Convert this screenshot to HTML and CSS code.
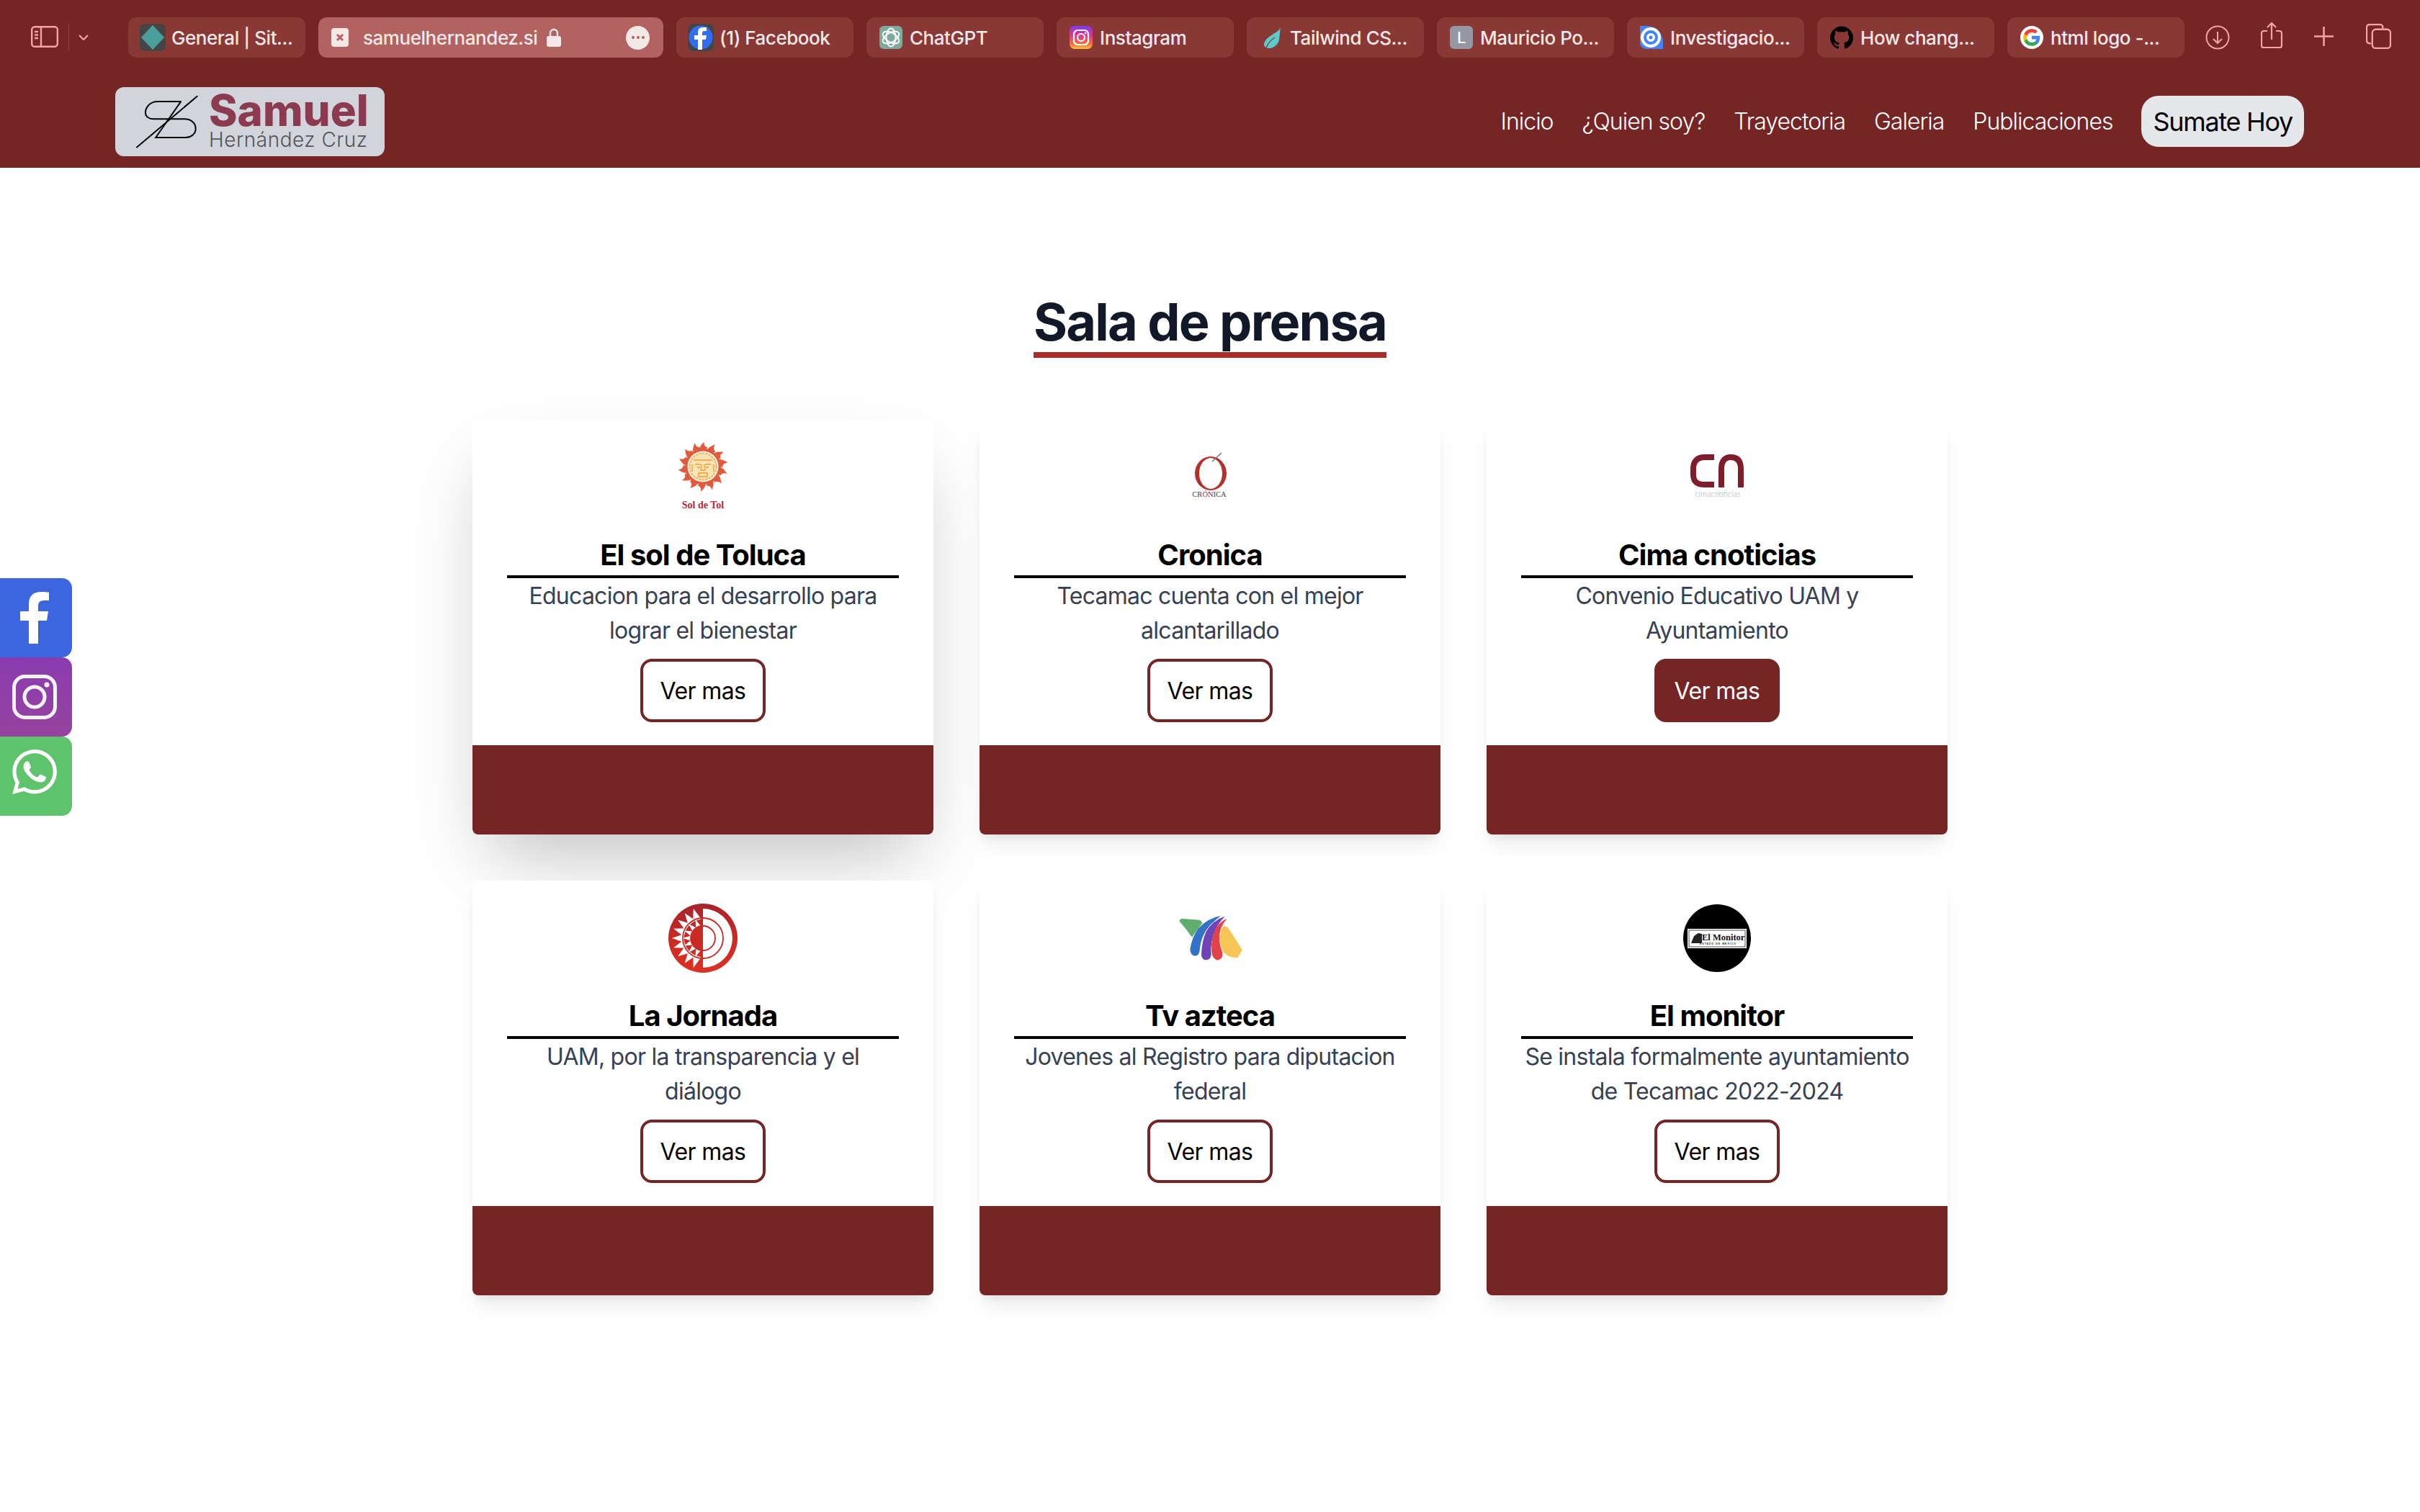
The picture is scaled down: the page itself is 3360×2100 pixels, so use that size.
FILE: index.html
```html
<!DOCTYPE html>
<html lang="es">

<head>
  <title>Sala de prensa</title>
  <meta charset="utf-8">
  <link rel="stylesheet" href="styles.css">
</head>

<body>
  <header class="header">
    <div class="strip">
      <div class="strip-left">
        <svg class="icon-sidebar" viewBox="0 0 38 30" fill="none" stroke="#f5a5a0" stroke-width="2.4">
          <rect x="1.2" y="1.2" width="35.6" height="27.6" rx="4"/>
          <path d="M14 1.2v27.6M5 8h5M5 12.500h5M5 17h5"/>
        </svg>
        <span class="strip-divider"></span>
        <svg class="icon-chevron" viewBox="0 0 14 8" fill="none" stroke="#f5a5a0" stroke-width="2.2"><path d="M1 1l6 6 6-6"/></svg>
      </div>

      <div class="tab">
        <svg class="fav fav-wide" viewBox="0 0 36 38"><rect width="36" height="38" rx="7" fill="#454545"/><path d="M18 2l16 17-16 17L2 19z" fill="#4a9f9b"/></svg>
        <span>General | Sit...</span>
      </div>
      <div class="tab tab-active">
        <svg class="fav-close" viewBox="0 0 24 26"><rect width="24" height="26" rx="4" fill="#f3e8e6"/><path d="M8 9l8 8M16 9l-8 8" stroke="#b26260" stroke-width="3"/></svg>
        <span>samuelhernandez.si</span>
        <svg class="lock" viewBox="0 0 20 26"><path d="M5 12V7a5 5 0 0 1 10 0v5" fill="none" stroke="#f3e8e6" stroke-width="2.400"/><rect y="11" width="20" height="15" rx="3" fill="#f3e8e6"/></svg>
        <span class="tab-more"><i></i><i></i><i></i></span>
      </div>
      <div class="tab">
        <svg class="fav fav-wide" viewBox="0 0 36 38"><rect width="36" height="38" rx="7" fill="#454545"/><circle cx="18" cy="19" r="16.500" fill="#2f6ef0"/><path d="M20 36V22h5l1-6h-6v-3c0-2 1-3 3-3h3V5h-5c-4.500 0-7 2.500-7 7v4h-5v6h5v14z" fill="#fff"/></svg>
        <span>(1) Facebook</span>
      </div>
      <div class="tab">
        <svg class="fav" viewBox="0 0 32 32" fill="none"><rect width="32" height="32" rx="6" fill="#7fa99b"/><g stroke="#fff" stroke-width="1.800"><ellipse cx="16" cy="16" rx="6.500" ry="12.500"/><ellipse cx="16" cy="16" rx="6.500" ry="12.500" transform="rotate(60 16 16)"/><ellipse cx="16" cy="16" rx="6.500" ry="12.500" transform="rotate(120 16 16)"/></g></svg>
        <span>ChatGPT</span>
      </div>
      <div class="tab">
        <svg class="fav" viewBox="0 0 32 32" fill="none"><defs><linearGradient id="ig" x1="0" y1="0" x2="0" y2="1"><stop offset="0" stop-color="#7b3ff2"/><stop offset=".4" stop-color="#e0308f"/><stop offset=".8" stop-color="#f4753c"/><stop offset="1" stop-color="#fbc33d"/></linearGradient></defs><rect width="32" height="32" rx="7" fill="url(#ig)"/><rect x="6" y="6" width="20" height="20" rx="5.500" stroke="#fff" stroke-width="2.200"/><circle cx="16" cy="16" r="5" stroke="#fff" stroke-width="2.200"/><circle cx="22" cy="10" r="1.300" fill="#fff"/></svg>
        <span>Instagram</span>
      </div>
      <div class="tab">
        <svg class="fav" viewBox="0 0 32 32"><path d="M29 1c-1 5-5 7-11 11-8 5-12 9-12 14 0 3 4 5 7 5 7 0 13-6 14-12 1-6 1-13 2-18z" fill="#5ccccb"/><path d="M9 31c2-7 6-11 12-15" stroke="#8a3836" stroke-width="1.200" fill="none"/></svg>
        <span>Tailwind CS...</span>
      </div>
      <div class="tab">
        <span class="fav fav-letter">L</span>
        <span>Mauricio Po...</span>
      </div>
      <div class="tab">
        <svg class="fav" viewBox="0 0 32 32" fill="none"><path d="M0 0h10c12 0 22 10 22 22v10H8c-4 0-8-4-8-8z" fill="#4285f4"/><circle cx="15" cy="16" r="14" fill="#fff"/><circle cx="15" cy="16" r="8" stroke="#4285f4" stroke-width="4"/><circle cx="15" cy="16" r="2.500" fill="#4285f4"/></svg>
        <span>Investigacio...</span>
      </div>
      <div class="tab">
        <svg class="fav" viewBox="0 0 24 24"><path fill="#000" d="M12 .297c-6.630 0-12 5.373-12 12 0 5.303 3.438 9.800 8.205 11.385.6.113.82-.258.82-.577 0-.285-.01-1.040-.015-2.040-3.338.724-4.042-1.610-4.042-1.610C4.422 18.070 3.633 17.700 3.633 17.700c-1.087-.744.084-.729.084-.729 1.205.084 1.838 1.236 1.838 1.236 1.070 1.835 2.809 1.305 3.495.998.108-.776.417-1.305.76-1.605-2.665-.3-5.466-1.332-5.466-5.930 0-1.310.465-2.380 1.235-3.220-.135-.303-.54-1.523.105-3.176 0 0 1.005-.322 3.300 1.230.96-.267 1.980-.399 3-.405 1.020.006 2.040.138 3 .405 2.280-1.552 3.285-1.230 3.285-1.230.645 1.653.24 2.873.12 3.176.765.84 1.230 1.910 1.230 3.220 0 4.610-2.805 5.625-5.475 5.920.42.36.81 1.096.81 2.220 0 1.606-.015 2.896-.015 3.286 0 .315.21.69.825.57C20.565 22.092 24 17.592 24 12.297c0-6.627-5.373-12-12-12"/></svg>
        <span>How chang...</span>
      </div>
      <div class="tab">
        <svg class="fav" viewBox="0 0 24 24"><circle cx="12" cy="12" r="12" fill="#fff"/><g transform="translate(2.400 2.400) scale(.8)"><path fill="#4285F4" d="M22.560 12.250c0-.78-.07-1.530-.2-2.250H12v4.260h5.920c-.26 1.370-1.040 2.530-2.210 3.310v2.770h3.570c2.080-1.920 3.280-4.740 3.280-8.090z"/><path fill="#34A853" d="M12 23c2.970 0 5.460-.98 7.280-2.660l-3.570-2.770c-.98.66-2.230 1.060-3.710 1.060-2.860 0-5.290-1.930-6.160-4.530H2.180v2.840C3.990 20.530 7.700 23 12 23z"/><path fill="#FBBC05" d="M5.840 14.090c-.22-.66-.35-1.360-.35-2.090s.13-1.430.35-2.090V7.070H2.180C1.430 8.550 1 10.220 1 12s.43 3.450 1.180 4.930l3.660-2.840z"/><path fill="#EA4335" d="M12 5.380c1.620 0 3.060.56 4.210 1.640l3.150-3.150C17.450 2.090 14.970 1 12 1 7.700 1 3.990 3.470 2.180 7.070l3.660 2.840c.87-2.600 3.300-4.530 6.160-4.530z"/></g></svg>
        <span>html logo -...</span>
      </div>

      <div class="strip-right">
        <svg class="tool-download" viewBox="0 0 34 34" fill="none" stroke="#f5a5a0" stroke-width="2"><circle cx="17" cy="17" r="15.500"/><path d="M17 9v16M11 19l6 6 6-6"/></svg>
        <svg class="tool-share" viewBox="0 0 30 38" fill="none" stroke="#f5a5a0" stroke-width="2.200"><path d="M9 13H4a3 3 0 0 0-3 3v17a3 3 0 0 0 3 3h22a3 3 0 0 0 3-3V16a3 3 0 0 0-3-3h-5M15 25V2M9 8l6-6 6 6"/></svg>
        <svg class="tool-plus" viewBox="0 0 28 28" fill="none" stroke="#f5a5a0" stroke-width="2.600"><path d="M14 0v28M0 14h28"/></svg>
        <svg class="tool-tabs" viewBox="0 0 36 36" fill="none" stroke="#f5a5a0" stroke-width="2.400"><path d="M7 28H5a4 4 0 0 1-4-4V5a4 4 0 0 1 4-4h15a4 4 0 0 1 4 4v2"/><rect x="9" y="8" width="26" height="27" rx="5"/></svg>
      </div>
    </div>

    <div class="navbar">
      <a class="logo" href="#">
        <svg class="logo-mark" viewBox="165 92 268 228" fill="none" stroke="#000" stroke-width="6" stroke-linecap="round">
          <path d="M174 313L426 100"/>
          <path d="M358 122H262C225 122 210 150 210 168C210 185 225 195 245 195H372C405 195 420 215 420 235C420 258 400 272 378 272H253L358 122"/>
        </svg>
        <span class="logo-text">
          <span class="logo-name">Samuel</span>
          <span class="logo-sub">Hernández Cruz</span>
        </span>
      </a>
      <nav class="nav">
        <a href="#">Inicio</a>
        <a href="#">¿Quien soy?</a>
        <a href="#">Trayectoria</a>
        <a href="#">Galeria</a>
        <a href="#">Publicaciones</a>
        <a class="nav-cta" href="#">Sumate Hoy</a>
      </nav>
    </div>
  </header>

  <div class="social">
    <a class="social-item social-fb" href="#">
      <svg viewBox="0 0 40 72"><path fill="#fff" d="M12 72V40H0V27h12V17C12 5 19 0 29 0c5 0 9 .4 11 .7V12h-7c-6 0-8 3-8 8v7h14l-2 13H25v32z"/></svg>
    </a>
    <a class="social-item social-ig" href="#">
      <svg viewBox="0 0 62 62" fill="none" stroke="#f3f4f6" stroke-width="5"><rect x="2.500" y="2.500" width="57" height="57" rx="15"/><circle cx="31" cy="31" r="14"/><circle cx="48" cy="14" r="3.500" fill="#f3f4f6" stroke="none"/></svg>
    </a>
    <a class="social-item social-wa" href="#">
      <svg viewBox="0 0 24 24"><path fill="#fff" d="M17.472 14.382c-.297-.149-1.758-.867-2.030-.967-.273-.099-.471-.148-.67.15-.197.297-.767.966-.94 1.164-.173.199-.347.223-.644.075-.297-.15-1.255-.463-2.390-1.475-.883-.788-1.480-1.761-1.653-2.059-.173-.297-.018-.458.13-.606.134-.133.298-.347.446-.52.149-.174.198-.298.298-.497.099-.198.05-.371-.025-.52-.075-.149-.669-1.612-.916-2.207-.242-.579-.487-.5-.669-.51-.173-.008-.371-.01-.57-.01-.198 0-.52.074-.792.372-.272.297-1.040 1.016-1.040 2.479 0 1.462 1.065 2.875 1.213 3.074.149.198 2.096 3.200 5.077 4.487.709.306 1.262.489 1.694.625.712.227 1.360.195 1.871.118.571-.085 1.758-.719 2.006-1.413.248-.694.248-1.289.173-1.413-.074-.124-.272-.198-.57-.347m-5.421 7.403h-.004a9.870 9.870 0 01-5.031-1.378l-.361-.214-3.741.982.998-3.648-.235-.374a9.860 9.860 0 01-1.510-5.260c.001-5.450 4.436-9.884 9.888-9.884 2.640 0 5.122 1.030 6.988 2.898a9.825 9.825 0 012.893 6.994c-.003 5.450-4.437 9.884-9.885 9.884m8.413-18.297A11.815 11.815 0 0012.050 0C5.495 0 .16 5.335.157 11.892c0 2.096.547 4.142 1.588 5.945L.057 24l6.305-1.654a11.882 11.882 0 005.683 1.448h.005c6.554 0 11.890-5.335 11.893-11.893a11.821 11.821 0 00-3.480-8.413z"/></svg>
    </a>
  </div>

  <main class="main">
    <div class="heading-row">
      <h1 class="heading">Sala de prensa</h1>
    </div>

    <section class="grid">
      <article class="card card-raised">
        <div class="card-body">
          <svg class="card-logo" viewBox="0 0 96 96">
            <defs>
              <path id="ray" d="M44 12C42 7 45 3 50 -2C49 2 50 5 55 7C52 9 50 11 50 14z" fill="#e05a3c"/>
            </defs>
            <circle cx="48" cy="33" r="25" fill="#e05a3c"/>
            <use href="#ray"/>
            <use href="#ray" transform="rotate(26 48 33)"/>
            <use href="#ray" transform="rotate(52 48 33)"/>
            <use href="#ray" transform="rotate(78 48 33)"/>
            <use href="#ray" transform="rotate(104 48 33)"/>
            <use href="#ray" transform="rotate(130 48 33)"/>
            <use href="#ray" transform="rotate(156 48 33)"/>
            <use href="#ray" transform="rotate(182 48 33)"/>
            <use href="#ray" transform="rotate(208 48 33)"/>
            <use href="#ray" transform="rotate(234 48 33)"/>
            <use href="#ray" transform="rotate(260 48 33)"/>
            <use href="#ray" transform="rotate(286 48 33)"/>
            <use href="#ray" transform="rotate(312 48 33)"/>
            <use href="#ray" transform="rotate(338 48 33)"/>
            <circle cx="48" cy="33" r="21.500" fill="#fff"/>
            <circle cx="48" cy="33" r="20" fill="#fbe3b8"/>
            <g fill="none" stroke="#f4b04f" stroke-width="1.800">
              <circle cx="48" cy="33" r="18.500" stroke-dasharray="3 1.500"/>
              <path d="M35 24h26M37 30h8M51 30h8M40 34h4M52 34h4M46 30l-1 8h6l-1-8M42 42h12v5H42zM33 30v10M63 30v10"/>
            </g>
            <text class="logo-blackletter" x="48" y="91" text-anchor="middle">Sol de Tol</text>
          </svg>
          <h2 class="card-title">El sol de Toluca</h2>
          <p class="card-text">Educacion para el desarrollo para lograr el bienestar</p>
          <a class="btn" href="#">Ver mas</a>
        </div>
        <div class="card-foot"></div>
      </article>

      <article class="card">
        <div class="card-body">
          <svg class="card-logo" viewBox="0 0 96 96">
            <ellipse cx="49" cy="42.500" rx="22" ry="23.500" fill="#b5302a"/>
            <ellipse cx="49" cy="42.500" rx="16" ry="21.500" fill="#fff"/>
            <path d="M51 26L64 14" stroke="#777" stroke-width="1.500"/>
            <text class="logo-cronica" x="47" y="75" text-anchor="middle">CR<tspan fill="#b5302a">Ó</tspan>NICA</text>
          </svg>
          <h2 class="card-title">Cronica</h2>
          <p class="card-text">Tecamac cuenta con el mejor alcantarillado</p>
          <a class="btn" href="#">Ver mas</a>
        </div>
        <div class="card-foot"></div>
      </article>

      <article class="card">
        <div class="card-body">
          <svg class="card-logo" viewBox="0 0 96 96" fill="none" stroke="#7f1d2d" stroke-width="8">
            <path d="M44 20H31C20 20 15 26 15 36V44C15 54 20 58 31 58H44"/>
            <path d="M54 62V36C54 25 59 20 67 20C76 20 81 25 81 36V62"/>
            <text class="logo-cima" x="49" y="75" text-anchor="middle">cimacnoticias</text>
          </svg>
          <h2 class="card-title">Cima cnoticias</h2>
          <p class="card-text">Convenio Educativo UAM y Ayuntamiento</p>
          <a class="btn btn-filled" href="#">Ver mas</a>
        </div>
        <div class="card-foot"></div>
      </article>

      <article class="card">
        <div class="card-body">
          <svg class="card-logo" viewBox="0 0 96 96">
            <defs>
              <linearGradient id="jornada" x1="0" y1="0" x2="0" y2="1"><stop offset="0" stop-color="#a8222e"/><stop offset=".5" stop-color="#c92a24"/><stop offset="1" stop-color="#dc3124"/></linearGradient>
              <polygon id="jout" points="22,42 22,54 5,48" fill="#fff"/>
              <polygon id="jin" points="31,44.500 31,51.500 20,48" fill="#fff"/>
            </defs>
            <circle cx="48" cy="48" r="48" fill="url(#jornada)"/>
            <path d="M48 7A41 41 0 0 1 48 89z" fill="#fff"/>
            <use href="#jout" transform="rotate(-72 48 48)"/>
            <use href="#jout" transform="rotate(-54 48 48)"/>
            <use href="#jout" transform="rotate(-36 48 48)"/>
            <use href="#jout" transform="rotate(-18 48 48)"/>
            <use href="#jout"/>
            <use href="#jout" transform="rotate(18 48 48)"/>
            <use href="#jout" transform="rotate(36 48 48)"/>
            <use href="#jout" transform="rotate(54 48 48)"/>
            <use href="#jout" transform="rotate(72 48 48)"/>
            <circle cx="48" cy="48" r="28" fill="none" stroke="#c92a24" stroke-width="1.800"/>
            <use href="#jin" transform="rotate(-68 48 48)"/>
            <use href="#jin" transform="rotate(-45 48 48)"/>
            <use href="#jin" transform="rotate(-22 48 48)"/>
            <use href="#jin"/>
            <use href="#jin" transform="rotate(22 48 48)"/>
            <use href="#jin" transform="rotate(45 48 48)"/>
            <use href="#jin" transform="rotate(68 48 48)"/>
            <circle cx="48" cy="48" r="17" fill="#fff" stroke="#c92a24" stroke-width="1.800"/>
            <path d="M48 31A17 17 0 0 0 48 65z" fill="#c92a24"/>
          </svg>
          <h2 class="card-title">La Jornada</h2>
          <p class="card-text">UAM, por la transparencia y el diálogo</p>
          <a class="btn" href="#">Ver mas</a>
        </div>
        <div class="card-foot"></div>
      </article>

      <article class="card">
        <div class="card-body">
          <svg class="card-logo" viewBox="96 45 288 288">
            <path fill="#5fae6e" d="M112 118Q115 108 125 108L195 113Q208 118 207 128Q185 155 165 185Q140 150 112 118Z"/>
            <path fill="#3273c6" d="M285 96Q230 105 190 150Q165 185 157 235Q158 262 178 263Q195 262 197 240Q200 180 240 135Q260 115 285 96Z"/>
            <path fill="#6d45b5" d="M302 98Q250 115 225 160Q205 200 204 260Q208 280 225 280Q245 278 245 255Q240 205 262 155Q280 120 302 98Z"/>
            <path fill="#e2434b" d="M310 107Q270 125 255 170Q240 215 250 262Q260 282 275 280Q295 275 292 250Q270 195 285 150Q295 125 310 107Z"/>
            <path fill="#f7c556" d="M300 140Q290 138 285 160Q272 205 295 245Q315 272 355 270Q365 255 374 238Q345 190 318 150Q310 138 300 140Z"/>
          </svg>
          <h2 class="card-title">Tv azteca</h2>
          <p class="card-text">Jovenes al Registro para diputacion federal</p>
          <a class="btn" href="#">Ver mas</a>
        </div>
        <div class="card-foot"></div>
      </article>

      <article class="card">
        <div class="card-body">
          <svg class="card-logo" viewBox="0 0 96 96">
            <circle cx="48" cy="48" r="47" fill="#000"/>
            <rect x="7" y="35" width="82" height="27" fill="#fff"/>
            <rect x="9" y="37" width="78" height="23" fill="none" stroke="#222" stroke-width=".8"/>
            <path d="M12 55L16 45L22 41L27 42V55z" fill="#222"/>
            <text class="logo-monitor" x="27" y="51">El Monitor</text>
            <text class="logo-monitor-sub" x="24" y="57">ESTADO DE MEXICO</text>
          </svg>
          <h2 class="card-title">El monitor</h2>
          <p class="card-text">Se instala formalmente ayuntamiento de Tecamac 2022-2024</p>
          <a class="btn" href="#">Ver mas</a>
        </div>
        <div class="card-foot"></div>
      </article>
    </section>
  </main>
</body>

</html>
```

FILE: styles.css
```css
* {
  box-sizing: border-box;
}

body {
  margin: 0;
  height: 2100px;
  overflow: hidden;
  background-color: #fff;
  font-family: Inter, "Liberation Sans", sans-serif;
}

a {
  text-decoration: none;
  color: inherit;
}

/* top bar */

.header {
  height: 233px;
  background-color: #752524;
}

.strip {
  display: flex;
  align-items: center;
  gap: 18px;
  padding-top: 24px;
  height: 80px;
}

.strip-left {
  display: flex;
  align-items: center;
  width: 160px;
  padding-left: 43px;
}

.icon-sidebar {
  width: 38px;
  height: 30px;
  margin-bottom: 2px;
}

.strip-divider {
  width: 1px;
  height: 38px;
  margin-left: 14px;
  background-color: #8f3f3d;
}

.icon-chevron {
  width: 14px;
  height: 8px;
  margin-left: 13px;
}

.tab {
  display: flex;
  align-items: center;
  flex: none;
  width: 246px;
  height: 56px;
  gap: 10px;
  padding-left: 18px;
  border-radius: 12px;
  background-color: #8a3836;
  color: #f4e9e8;
  font-size: 26px;
  font-weight: 500;
  letter-spacing: -0.45px;
  white-space: nowrap;
}

.tab-active {
  position: relative;
  width: 479px;
  background-color: #b26260;
  gap: 0;
}

.fav {
  flex: none;
  width: 32px;
  height: 32px;
}

.fav-wide {
  width: 36px;
  height: 38px;
  margin: 0 -2px;
}

.fav-letter {
  display: flex;
  align-items: center;
  justify-content: center;
  border-radius: 6px;
  background-color: #9597a3;
  color: #fff;
  font-size: 22px;
}

.fav-close {
  flex: none;
  width: 24px;
  height: 26px;
  margin-right: 20px;
}

.lock {
  flex: none;
  width: 20px;
  height: 26px;
  margin-left: 13px;
}

.tab-more {
  display: flex;
  align-items: center;
  justify-content: center;
  gap: 3px;
  width: 33px;
  height: 33px;
  margin-left: auto;
  margin-right: 19px;
  border-radius: 50%;
  background-color: #f3e8e6;
}

.tab-more i {
  width: 4px;
  height: 4px;
  border-radius: 50%;
  background-color: #b26260;
}

.strip-right {
  display: flex;
  align-items: center;
  margin-left: 11px;
}

.tool-download {
  width: 34px;
  height: 34px;
  margin-bottom: 1px;
}

.tool-share {
  width: 30px;
  height: 38px;
  margin-left: 43px;
  margin-bottom: 6px;
}

.tool-plus {
  width: 27px;
  height: 27px;
  margin-left: 44px;
  margin-bottom: 4px;
}

.tool-tabs {
  width: 35px;
  height: 35px;
  margin-left: 45px;
  margin-bottom: 3px;
}

.navbar {
  display: flex;
  align-items: flex-start;
  justify-content: space-between;
  padding: 41px 161px 0 160px;
}

.logo {
  display: flex;
  align-items: center;
  width: 374px;
  height: 96px;
  padding-left: 27px;
  border-radius: 12px;
  background-color: #d1d5db;
}

.logo-mark {
  width: 89px;
  height: 76px;
}

.logo-text {
  display: flex;
  flex-direction: column;
  margin-left: 14px;
}

.logo-name {
  color: #8b3a4f;
  font-size: 60px;
  font-weight: 800;
  line-height: 50px;
}

.logo-sub {
  color: #555;
  font-size: 28px;
  font-weight: 300;
  line-height: 32px;
  letter-spacing: 0.5px;
}

.nav {
  display: flex;
  align-items: center;
  gap: 40px;
  height: 71px;
  margin-top: 12px;
  color: #fff;
  font-size: 32px;
  font-weight: 300;
  letter-spacing: -1px;
}

.nav-cta {
  display: flex;
  align-items: center;
  height: 71px;
  padding: 0 16px;
  border-radius: 24px;
  background-color: #e5e7eb;
  color: #000;
  font-size: 36px;
  font-weight: 400;
  letter-spacing: -1.3px;
}

/* social buttons */

.social {
  position: fixed;
  top: 803px;
  left: 0;
  display: flex;
  flex-direction: column;
}

.social-item {
  display: flex;
  align-items: center;
  width: 100px;
  height: 110px;
  padding-left: 17px;
  border-radius: 0 14px 14px 0;
}

.social-item svg {
  width: 62px;
  height: 62px;
}

.social-fb {
  padding-left: 28px;
  background-color: #3b66e0;
}

.social-fb svg {
  width: 40px;
  height: 72px;
}

.social-ig {
  background: linear-gradient(#8a3db0, #96429e);
}

.social-wa {
  background-color: #5fc36d;
}

.social-wa svg {
  margin-bottom: 12px;
}

/* content */

.main {
  padding-top: 176px;
}

.heading-row {
  display: flex;
  justify-content: center;
  margin-bottom: 86px;
}

.heading {
  margin: 0;
  padding-bottom: 4px;
  border-bottom: 8px solid #a82f29;
  color: #111827;
  font-size: 72px;
  font-weight: 700;
  line-height: 76px;
  letter-spacing: -1.800px;
}

.grid {
  display: grid;
  grid-template-columns: repeat(3, 640px);
  justify-content: center;
  gap: 64px;
}

.card {
  display: flex;
  flex-direction: column;
  height: 576px;
  border-radius: 8px;
  background-color: #fff;
  box-shadow: 0 20px 30px -6px rgba(0, 0, 0, 0.08), 0 8px 12px -4px rgba(0, 0, 0, 0.06);
}

.card-raised {
  box-shadow: 0 50px 100px -24px rgba(0, 0, 0, 0.25);
}

.card-body {
  display: flex;
  flex-direction: column;
  align-items: center;
  flex: 1;
  padding: 32px 48px 0;
}

.card-logo {
  flex: none;
  width: 96px;
  height: 96px;
}

.card-title {
  width: 100%;
  margin: 32px 0 0;
  border-bottom: 4px solid #000;
  color: #000;
  font-size: 40px;
  font-weight: 700;
  line-height: 56px;
  text-align: center;
  letter-spacing: -1px;
}

.card-text {
  margin: 0;
  padding-top: 1px;
  color: #374151;
  font-size: 32px;
  line-height: 48px;
  text-align: center;
  letter-spacing: -0.75px;
}

.btn {
  display: flex;
  align-items: center;
  height: 88px;
  margin-top: 15px;
  padding: 0 24px;
  border: 4px solid #752524;
  border-radius: 16px;
  color: #000;
  font-size: 32px;
  letter-spacing: -0.6px;
}

.btn-filled {
  background-color: #752524;
  color: #fff;
}

.card-foot {
  flex: none;
  height: 124px;
  border-radius: 0 0 8px 8px;
  background-color: #752524;
}

/* lettering inside the press logos */

.logo-blackletter {
  fill: #b22a3a;
  font-family: "Liberation Serif", serif;
  font-size: 14px;
  font-weight: 700;
}

.logo-cronica {
  fill: #444;
  font-family: "Liberation Serif", serif;
  font-size: 10.500px;
}

.logo-cima {
  fill: #aaa;
  stroke: none;
  font-family: Lato, sans-serif;
  font-size: 11px;
  font-weight: 300;
}

.logo-monitor {
  fill: #111;
  font-family: "Liberation Serif", serif;
  font-size: 12.500px;
  font-weight: 700;
}

.logo-monitor-sub {
  fill: #222;
  font-family: "Liberation Sans", sans-serif;
  font-size: 3.500px;
  font-weight: 700;
  letter-spacing: 1px;
}
```
